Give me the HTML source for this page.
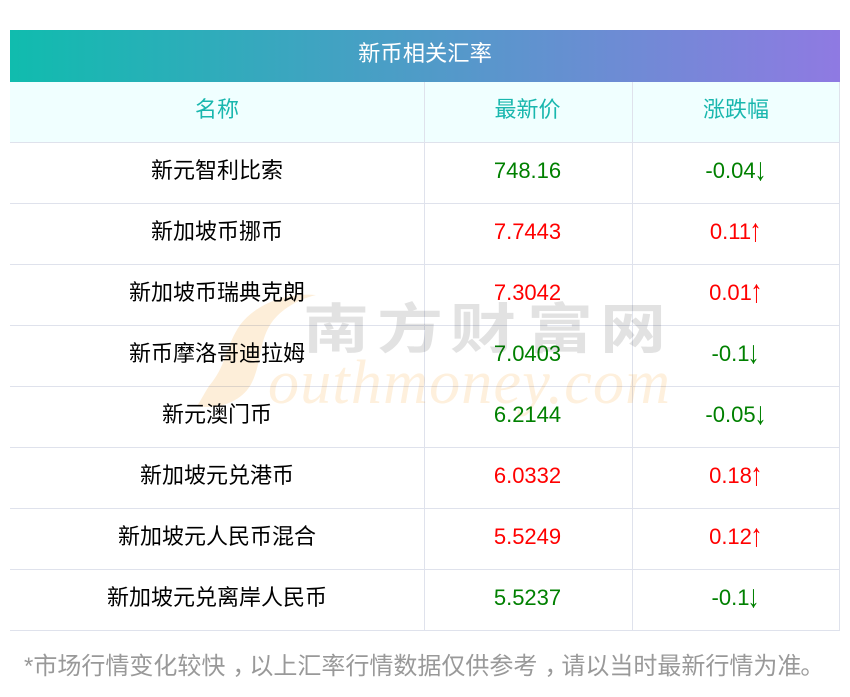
<!DOCTYPE html>
<html lang="zh">
<head>
<meta charset="utf-8">
<title>新币相关汇率</title>
<style>
html,body{margin:0;padding:0;background:#fff;width:850px;height:697px;overflow:hidden}
body{position:relative;font-family:"Liberation Sans","WenQuanYi Zen Hei","Noto Sans CJK SC",sans-serif}
.title{position:absolute;left:10px;top:30px;width:830px;height:52px;line-height:48px;text-align:center;color:#fff;font-size:22.3px;background:linear-gradient(90deg,#10bcae,#8f7ae2)}
.wm{position:absolute;left:0;top:0;mix-blend-mode:multiply}
table{position:absolute;left:10px;top:82px;width:830px;border-collapse:separate;border-spacing:0;table-layout:fixed;font-size:22px}
td,th{font-weight:normal;text-align:center;padding:0;border-bottom:1px solid #dfe2ec;border-right:1px solid #dfe2ec;height:60px;vertical-align:top}
td:nth-child(2),th:nth-child(2){padding-right:2px}
th{color:#19b7ae;background:#f0ffff;line-height:56px}
td{color:#000;line-height:56px}
.r{color:#f00}.g{color:#008000}
.a{display:inline-block;font-family:"WenQuanYi Zen Hei","Liberation Sans",sans-serif;transform:translateX(-1px) scale(1.1,1.45);transform-origin:50% 55%}
.note{position:absolute;left:24px;top:649px;font-size:24px;line-height:36px;color:#999;white-space:nowrap}
.c{position:relative;left:7px}
</style>
</head>
<body>
<div class="title">新币相关汇率</div>
<table>
<colgroup><col style="width:415px"><col style="width:208px"><col style="width:207px"></colgroup>
<tr><th>名称</th><th>最新价</th><th>涨跌幅</th></tr>
<tr><td>新元智利比索</td><td class="g">748.16</td><td class="g">-0.04<span class="a">↓</span></td></tr>
<tr><td>新加坡币挪币</td><td class="r">7.7443</td><td class="r">0.11<span class="a">↑</span></td></tr>
<tr><td>新加坡币瑞典克朗</td><td class="r">7.3042</td><td class="r">0.01<span class="a">↑</span></td></tr>
<tr><td>新币摩洛哥迪拉姆</td><td class="g">7.0403</td><td class="g">-0.1<span class="a">↓</span></td></tr>
<tr><td>新元澳门币</td><td class="g">6.2144</td><td class="g">-0.05<span class="a">↓</span></td></tr>
<tr><td>新加坡元兑港币</td><td class="r">6.0332</td><td class="r">0.18<span class="a">↑</span></td></tr>
<tr><td>新加坡元人民币混合</td><td class="r">5.5249</td><td class="r">0.12<span class="a">↑</span></td></tr>
<tr><td>新加坡元兑离岸人民币</td><td class="g">5.5237</td><td class="g">-0.1<span class="a">↓</span></td></tr>
</table>
<svg class="wm" width="850" height="697" viewBox="0 0 850 697">
<path d="M316 295C285 292 255 305 240 325C225 347 227 365 209 386C204 394 201 400 197 406C218 410 240 402 250 386C262 365 258 345 270 325C278 312 295 300 316 295Z" fill="#fdeed9"/>
<text x="268" y="403" font-family="'Liberation Serif',serif" font-style="italic" font-size="62" fill="#fef0dd" textLength="402" lengthAdjust="spacing">outhmoney.com</text>
<g font-family="'Noto Sans CJK SC',sans-serif" font-weight="700" font-size="60" fill="#e2e2e2">
<text transform="translate(303 348) scale(1.1 .9)">南</text>
<text transform="translate(377 348) scale(1.1 .9)">方</text>
<text transform="translate(450 348) scale(1.1 .9)">财</text>
<text transform="translate(527 348) scale(1.1 .9)">富</text>
<text transform="translate(600 348) scale(1.1 .9)">网</text>
</g>
</svg>
<div class="note">*市场行情变化较快<span class="c">，</span>以上汇率行情数据仅供参考<span class="c">，</span>请以当时最新行情为准<span class="c" style="left:-1px">。</span></div>
</body>
</html>
